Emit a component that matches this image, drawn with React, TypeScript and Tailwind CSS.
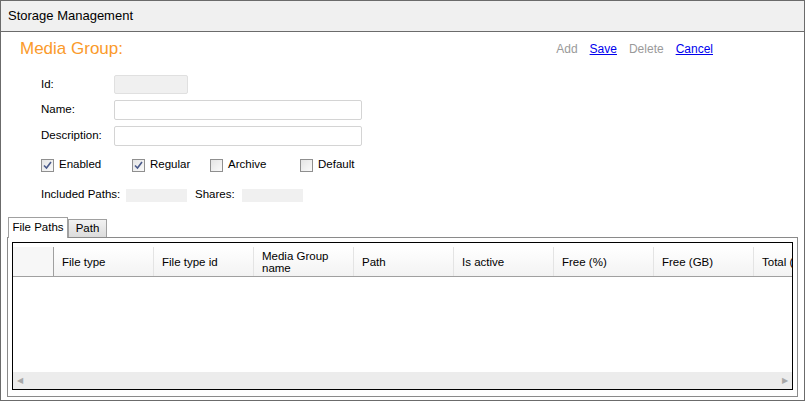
import React from 'react';

const cols = ['File type', 'File type id', 'Media Group name', 'Path', 'Is active', 'Free (%)', 'Free (GB)', 'Total (GB)'];

function Check({ label, checked, w }: { label: string; checked?: boolean; w: string }) {
  return (
    <div className={`flex items-center gap-[5px] ${w}`}>
      <span className="flex h-[13px] w-[13px] items-center justify-center border border-[#8f8f8f] bg-gradient-to-br from-[#e4e4e4] to-[#fafafa]">
        {checked && (
          <svg width="9" height="9" viewBox="0 0 9 9">
            <path d="M1 4.5 L3.5 7 L8 1" fill="none" stroke="#4a5a8a" strokeWidth="1.6" />
          </svg>
        )}
      </span>
      <span>{label}</span>
    </div>
  );
}

export default function App() {
  return (
    <div className="h-[403px] w-[806px] bg-white text-[11.5px] text-black" style={{ fontFamily: '"Liberation Sans", Arial, sans-serif' }}>
      <div className="flex h-[401px] w-[805px] flex-col border border-[#6b6b6b]">
        <div className="flex h-[32px] items-center border-b border-[#6b6b6b] bg-[#f0f0f0] pl-[7px] text-[13px]">
          Storage Management
        </div>
        <div className="flex flex-1 flex-col px-[6px]">
          <div className="flex h-[34px] items-center justify-between pl-[13px] pr-[85px]">
            <span className="text-[17px] text-[#fb9a2a]">Media Group:</span>
            <div className="flex gap-[12px] text-[12px]">
              <span className="text-[#9a9a9a]">Add</span>
              <span className="text-[#0000ee] underline">Save</span>
              <span className="text-[#9a9a9a]">Delete</span>
              <span className="text-[#0000ee] underline">Cancel</span>
            </div>
          </div>
          <div className="flex flex-col gap-[6px] pl-[34px] pt-[9px]">
            <div className="flex h-[19px] items-center">
              <span className="w-[73px]">Id:</span>
              <div className="h-[19px] w-[74px] rounded-[2px] border border-[#e0e0e0] bg-[#f0f0f0]" />
            </div>
            <div className="flex h-[20px] items-center">
              <span className="w-[73px]">Name:</span>
              <div className="h-[20px] w-[248px] rounded-[2px] border border-[#d4d4d4] bg-white" />
            </div>
            <div className="flex h-[20px] items-center">
              <span className="w-[73px]">Description:</span>
              <div className="h-[20px] w-[248px] rounded-[2px] border border-[#d4d4d4] bg-white" />
            </div>
            <div className="mt-[6px] flex h-[14px] items-center">
              <Check label="Enabled" checked w="w-[91px]" />
              <Check label="Regular" checked w="w-[78px]" />
              <Check label="Archive" w="w-[90px]" />
              <Check label="Default" w="w-[80px]" />
            </div>
            <div className="mt-[10px] flex h-[14px] items-center">
              <span className="w-[85px]">Included Paths:</span>
              <div className="h-[13px] w-[61px] bg-[#f0f0f0]" />
              <span className="ml-[8px] w-[47px]">Shares:</span>
              <div className="h-[13px] w-[61px] bg-[#f0f0f0]" />
            </div>
          </div>
          <div className="mt-[14px] flex h-[21px] items-end pl-[1px]">
            <div className="relative z-10 -mb-px flex h-[21px] w-[60px] items-center justify-center border border-b-0 border-[#a0a0a0] bg-white">File Paths</div>
            <div className="flex h-[18px] w-[39px] items-center justify-center border border-b-0 border-[#a0a0a0] bg-gradient-to-b from-[#f2f2f2] to-[#dcdcdc]">Path</div>
          </div>
          <div className="mb-[3px] h-[160px] border border-[#8a8a8a] p-[4px]">
            <div className="flex h-[148px] flex-col border border-black">
              <div className="mt-[4px] flex h-[30px] border-b border-[#a0a0a0] bg-gradient-to-b from-white to-[#f3f3f3]">
                <div className="w-[41px] shrink-0 border-r border-[#a0a0a0] bg-[#f7f7f7]" />
                <div className="flex flex-1 overflow-hidden">
                  {cols.map((c) => (
                    <div key={c} className="flex w-[100px] shrink-0 items-center whitespace-nowrap border-r border-[#e4e4e4] pl-[8px] leading-[12px]">
                      {c === 'Media Group name' ? <span>Media Group<br />name</span> : c}
                    </div>
                  ))}
                </div>
              </div>
              <div className="flex-1" />
              <div className="flex h-[17px] items-center justify-between bg-[#ececec] px-[4px] text-[8px] text-[#a8a8a8]">
                <span>◀</span>
                <span>▶</span>
              </div>
            </div>
          </div>
        </div>
      </div>
    </div>
  );
}
